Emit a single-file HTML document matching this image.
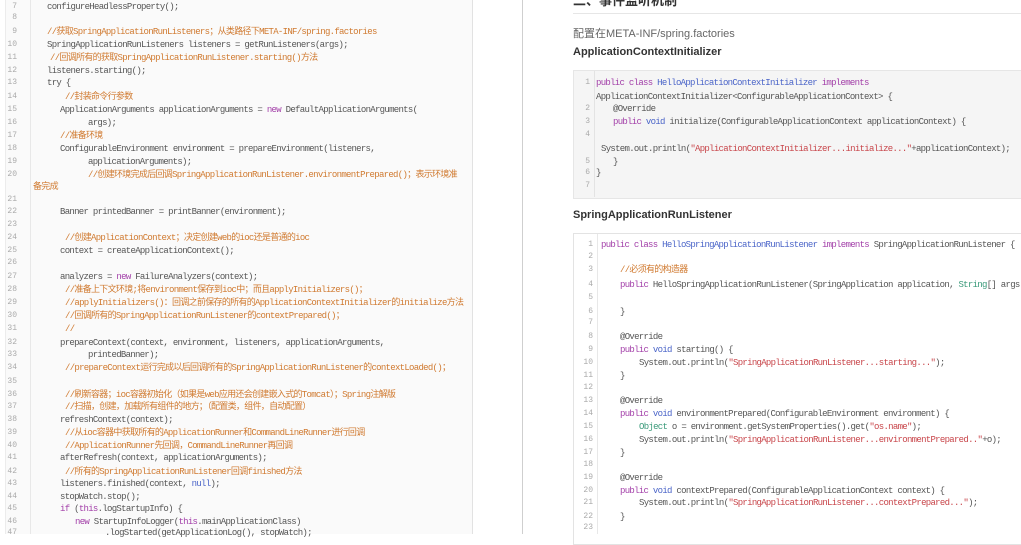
<!DOCTYPE html>
<html><head><meta charset="utf-8"><style>
body{margin:0;width:1021px;height:534px;overflow:hidden;background:#fff;position:relative;font-family:"Liberation Sans","Noto Sans CJK SC",sans-serif}
.l{position:absolute;white-space:pre;font-family:"Liberation Mono","Noto Sans CJK SC",monospace;font-size:9px;letter-spacing:-0.7px;line-height:12px;height:12px;color:#555}
.n{position:absolute;font-family:"Liberation Mono",monospace;font-size:8px;color:#aaa;line-height:12px;width:14px;text-align:right}
.c{color:#d07a30}.k{color:#a23ea8}.t{color:#4a64c8}.s{color:#c8454a}.g{color:#3a9a7a}
</style></head><body>
<div style="position:absolute;left:5px;top:0;width:466px;height:534px;background:#fafafa;border-right:1px solid #e2e2e2;border-left:1px solid #ececec"></div>
<div style="position:absolute;left:30px;top:0;width:1px;height:534px;background:#e8e8e8"></div>
<div style="position:absolute;left:522px;top:0;width:1px;height:534px;background:#cfcfcf"></div>
<div style="position:absolute;left:573px;top:-10px;font-size:13px;font-weight:bold;color:#333">二、事件监听机制</div>
<div style="position:absolute;left:573px;top:13px;width:448px;height:1px;background:#e6e6e6"></div>
<div style="position:absolute;left:573px;top:25px;font-size:11px;color:#666">配置在META-INF/spring.factories</div>
<div style="position:absolute;left:573px;top:46px;font-size:11px;font-weight:bold;color:#333">ApplicationContextInitializer</div>
<div style="position:absolute;left:573px;top:70px;width:460px;height:127px;background:#f5f5f5;border:1px solid #e6e6e6"></div>
<div style="position:absolute;left:594px;top:71px;width:1px;height:126px;background:#e3e3e3"></div>
<div style="position:absolute;left:573px;top:209px;font-size:11px;font-weight:bold;color:#333">SpringApplicationRunListener</div>
<div style="position:absolute;left:573px;top:233px;width:460px;height:310px;background:#fff;border:1px solid #e3e3e3"></div>
<div style="position:absolute;left:597px;top:234px;width:1px;height:300px;background:#e8e8e8"></div>
<script>
function add(arr,nx,cx){var h='';arr.forEach(function(r){var y=r[0]-6;if(r[1]!=='')h+='<div class="n" style="left:'+nx+'px;top:'+y+'px">'+r[1]+'</div>';if(r[3])h+='<div class="l" style="left:'+(cx+r[2])+'px;top:'+y+'px">'+r[3]+'</div>';});document.body.insertAdjacentHTML('beforeend',h);}
var C=function(s){return '<span class="c">'+s+'</span>'};
add([
[7,7,0,'configureHeadlessProperty();'],[18,8,0,''],
[32,9,0,C('//获取SpringApplicationRunListeners；从类路径下META-INF/spring.factories')],
[45,10,0,'SpringApplicationRunListeners listeners = getRunListeners(args);'],
[58,11,3,C('//回调所有的获取SpringApplicationRunListener.starting()方法')],
[71,12,0,'listeners.starting();'],[83,13,0,'try {'],
[97,14,18,C('//封装命令行参数')],
[110,15,13,'ApplicationArguments applicationArguments = <span class="k">new</span> DefaultApplicationArguments('],
[123,16,41,'args);'],[136,17,13,C('//准备环境')],
[149,18,13,'ConfigurableEnvironment environment = prepareEnvironment(listeners,'],
[162,19,41,'applicationArguments);'],
[175,20,41,C('//创建环境完成后回调SpringApplicationRunListener.environmentPrepared()；表示环境准')],
[187,'',-14,C('备完成')],[200,21,0,''],
[212,22,13,'Banner printedBanner = printBanner(environment);'],[225,23,0,''],
[238,24,18,C('//创建ApplicationContext；决定创建web的ioc还是普通的ioc')],
[251,25,13,'context = createApplicationContext();'],[263,26,0,''],
[277,27,13,'analyzers = <span class="k">new</span> FailureAnalyzers(context);'],
[290,28,18,C('//准备上下文环境;将environment保存到ioc中；而且applyInitializers()；')],
[303,29,18,C('//applyInitializers()：回调之前保存的所有的ApplicationContextInitializer的initialize方法')],
[316,30,18,C('//回调所有的SpringApplicationRunListener的contextPrepared()；')],
[329,31,18,C('//')],
[343,32,13,'prepareContext(context, environment, listeners, applicationArguments,'],
[355,33,41,'printedBanner);'],
[368,34,18,C('//prepareContext运行完成以后回调所有的SpringApplicationRunListener的contextLoaded()；')],
[382,35,0,''],
[395,36,18,C('//刷新容器；ioc容器初始化（如果是web应用还会创建嵌入式的Tomcat）；Spring注解版')],
[407,37,18,C('//扫描，创建，加载所有组件的地方；（配置类，组件，自动配置）')],
[420,38,13,'refreshContext(context);'],
[433,39,18,C('//从ioc容器中获取所有的ApplicationRunner和CommandLineRunner进行回调')],
[446,40,18,C('//ApplicationRunner先回调，CommandLineRunner再回调')],
[458,41,13,'afterRefresh(context, applicationArguments);'],
[472,42,18,C('//所有的SpringApplicationRunListener回调finished方法')],
[484,43,13,'listeners.finished(context, <span class="t">null</span>);'],
[497,44,13,'stopWatch.stop();'],
[509,45,13,'<span class="k">if</span> (<span class="k">this</span>.logStartupInfo) {'],
[522,46,28,'<span class="k">new</span> StartupInfoLogger(<span class="k">this</span>.mainApplicationClass)'],
[533,47,58,'.logStarted(getApplicationLog(), stopWatch);']
],3,47);
var P='<span class="k">public</span>',V='<span class="t">void</span>';
add([
[83,1,0,P+' <span class="k">class</span> <span class="t">HelloApplicationContextInitializer</span> <span class="k">implements</span>'],
[97,'',0,'ApplicationContextInitializer&lt;ConfigurableApplicationContext&gt; {'],
[109,2,17,'@Override'],
[122,3,17,P+' '+V+' initialize(ConfigurableApplicationContext applicationContext) {'],
[135,4,0,''],
[149,'',5,'System.out.println(<span class="s">"ApplicationContextInitializer...initialize..."</span>+applicationContext);'],
[162,5,17,'}'],[173,6,0,'}'],[186,7,0,'']
],576,596);
add([
[245,1,0,P+' <span class="k">class</span> <span class="t">HelloSpringApplicationRunListener</span> <span class="k">implements</span> SpringApplicationRunListener {'],
[257,2,0,''],[270,3,19,C('//必须有的构造器')],
[285,4,19,P+' HelloSpringApplicationRunListener(SpringApplication application, <span class="g">String</span>[] args){'],
[298,5,0,''],[312,6,19,'}'],[323,7,0,''],
[337,8,19,'@Override'],[350,9,19,P+' '+V+' starting() {'],
[363,10,38,'System.out.println(<span class="s">"SpringApplicationRunListener...starting..."</span>);'],
[376,11,19,'}'],[388,12,0,''],[401,13,19,'@Override'],
[414,14,19,P+' '+V+' environmentPrepared(ConfigurableEnvironment environment) {'],
[427,15,38,'<span class="g">Object</span> o = environment.getSystemProperties().get(<span class="s">"os.name"</span>);'],
[440,16,38,'System.out.println(<span class="s">"SpringApplicationRunListener...environmentPrepared.."</span>+o);'],
[453,17,19,'}'],[465,18,0,''],[478,19,19,'@Override'],
[491,20,19,P+' '+V+' contextPrepared(ConfigurableApplicationContext context) {'],
[503,21,38,'System.out.println(<span class="s">"SpringApplicationRunListener...contextPrepared..."</span>);'],
[517,22,19,'}'],[528,23,0,'']
],579,601);
</script>
</body></html>
